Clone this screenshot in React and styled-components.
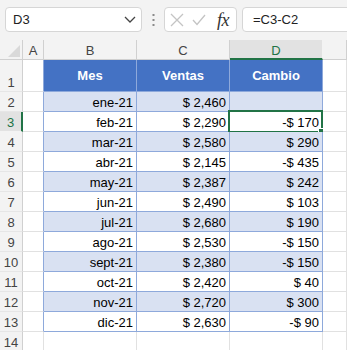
import React from "react";
import styled, { createGlobalStyle, css } from "styled-components";

const GlobalStyle = createGlobalStyle`
  html, body { margin: 0; padding: 0; background: #ffffff; overflow: hidden; }
  body { font-family: "Liberation Sans", Arial, sans-serif; }
`;

const GREEN = "#217346";
const BLUE_FILL = "#4472c4";
const BAND = "#d9e1f2";
const BLUE_LINE = "#8ea9db";
const GRID = "#e1e1e1";
const HEAD_LINE = "#d0d0d0";

const Page = styled.div`
  width: 347px;
  height: 350px;
  overflow: hidden;
  display: flex;
  flex-direction: column;
`;

const Toolbar = styled.div`
  height: 40px;
  flex: none;
  background: #f3f3f3;
  display: flex;
  align-items: flex-start;
  padding: 7px 0 0 5px;
  box-sizing: border-box;
  overflow: hidden;
`;

const Box = styled.div`
  height: 25px;
  box-sizing: border-box;
  background: #ffffff;
  border: 1px solid #d6d6d6;
  border-radius: 4px;
  display: flex;
  align-items: center;
  flex: none;
`;

const NameBox = styled(Box)`
  width: 137px;
  padding: 0 5px 0 7px;
  justify-content: space-between;
  font-size: 13px;
  color: #222;
`;

const Dots = styled.div`
  width: 22px;
  height: 25px;
  display: flex;
  align-items: center;
  justify-content: center;
  flex: none;
`;

const FxBox = styled(Box)`
  width: 73px;
  padding: 0 4px 0 5px;
  gap: 8px;
`;

const FxText = styled.span`
  font-family: "Liberation Serif", "DejaVu Serif", serif;
  font-style: italic;
  font-size: 18px;
  color: #333;
  margin-left: 3px;
  line-height: 1;
  letter-spacing: -0.5px;
`;

const FormulaBox = styled(Box)`
  margin-left: 5px;
  width: 160px;
  padding-left: 10px;
  font-size: 13px;
  color: #222;
`;

const Sheet = styled.div`
  display: grid;
  grid-template-columns: 23px 21px 93px 93px 93px 1fr;
  grid-template-rows: 20px 32px repeat(13, 20px);
  font-size: 13px;
`;

const Cell = styled.div`
  box-sizing: border-box;
  position: relative;
  display: flex;
  align-items: flex-end;
  justify-content: ${(p) => p.$align || "flex-end"};
  padding: 0 3px 1px 3px;
  white-space: nowrap;
  color: #000;
  background: ${(p) => p.$fill || "#ffffff"};
  border-right: 1px solid ${(p) => p.$right || GRID};
  border-bottom: 1px solid ${(p) => p.$bottom || GRID};
  ${(p) =>
    p.$head &&
    css`
      align-items: center;
      justify-content: center;
      padding: 0;
      font-weight: bold;
      color: #ffffff;
    `}
`;

const ColHead = styled.div`
  box-sizing: border-box;
  display: flex;
  align-items: center;
  justify-content: center;
  padding-top: 2px;
  font-size: 13px;
  color: ${(p) => (p.$active ? GREEN : "#444")};
  background: ${(p) => (p.$active ? "#e2e2e2" : "#f3f3f3")};
  border-right: 1px solid ${(p) => (p.$active ? "#f3f3f3" : HEAD_LINE)};
  border-bottom: ${(p) => (p.$active ? `2px solid ${GREEN}` : `1px solid ${HEAD_LINE}`)};
  position: relative;
`;

const RowHead = styled.div`
  box-sizing: border-box;
  display: flex;
  align-items: flex-end;
  justify-content: center;
  padding-bottom: 1px;
  font-size: 13px;
  color: ${(p) => (p.$active ? GREEN : "#444")};
  background: ${(p) => (p.$active ? "#e2e2e2" : "#f3f3f3")};
  border-right: ${(p) => (p.$active ? `2px solid ${GREEN}` : `1px solid ${HEAD_LINE}`)};
  border-bottom: 1px solid ${(p) => (p.$active ? "#f3f3f3" : "#e6e6e6")};
`;

const Corner = styled(ColHead)`
  align-items: flex-end;
  justify-content: flex-end;
  padding: 0 2px 2px 0;
`;

const Selection = styled.div`
  position: absolute;
  left: -2px;
  top: -2px;
  right: -1px;
  bottom: -2px;
  border: 2px solid ${GREEN};
  pointer-events: none;
`;

const Handle = styled.div`
  position: absolute;
  right: -4px;
  bottom: -4px;
  width: 5px;
  height: 5px;
  background: ${GREEN};
  border: 1px solid #ffffff;
`;

const data = [
  ["ene-21", "$ 2,460", ""],
  ["feb-21", "$ 2,290", "-$ 170"],
  ["mar-21", "$ 2,580", "$ 290"],
  ["abr-21", "$ 2,145", "-$ 435"],
  ["may-21", "$ 2,387", "$ 242"],
  ["jun-21", "$ 2,490", "$ 103"],
  ["jul-21", "$ 2,680", "$ 190"],
  ["ago-21", "$ 2,530", "-$ 150"],
  ["sept-21", "$ 2,380", "-$ 150"],
  ["oct-21", "$ 2,420", "$ 40"],
  ["nov-21", "$ 2,720", "$ 300"],
  ["dic-21", "$ 2,630", "-$ 90"],
];

const Chevron = () => (
  <svg width="12" height="7" viewBox="0 0 12 7">
    <path d="M1 1 L6 6 L11 1" fill="none" stroke="#444" strokeWidth="1.3" />
  </svg>
);

const VDots = () => (
  <svg width="3" height="12" viewBox="0 0 3 12">
    <rect x="0.5" y="0" width="2" height="2" fill="#8a8a8a" />
    <rect x="0.5" y="5" width="2" height="2" fill="#8a8a8a" />
    <rect x="0.5" y="10" width="2" height="2" fill="#8a8a8a" />
  </svg>
);

const XIcon = () => (
  <svg width="14" height="14" viewBox="0 0 14 14">
    <path d="M1 1 L13 13 M13 1 L1 13" stroke="#c4c4c4" strokeWidth="1.3" fill="none" />
  </svg>
);

const CheckIcon = () => (
  <svg width="14" height="12" viewBox="0 0 14 12">
    <path d="M1 6 L5 10.5 L13 1" stroke="#c4c4c4" strokeWidth="1.3" fill="none" />
  </svg>
);

const CornerTri = () => (
  <svg width="12" height="12" viewBox="0 0 12 12">
    <path d="M12 0 L12 12 L0 12 Z" fill="#d9d9d9" />
  </svg>
);

export default function App() {
  const rows = [];
  // Row 1: header
  rows.push(
    <React.Fragment key="r1">
      <RowHead>1</RowHead>
      <Cell $right={BLUE_LINE} />
      <Cell $head $fill={BLUE_FILL} $right={BLUE_LINE} $bottom={BLUE_LINE}>Mes</Cell>
      <Cell $head $fill={BLUE_FILL} $right={BLUE_LINE} $bottom={BLUE_LINE}>Ventas</Cell>
      <Cell $head $fill={BLUE_FILL} $right={BLUE_LINE} $bottom={BLUE_LINE}>Cambio</Cell>
      <Cell />
    </React.Fragment>
  );
  data.forEach((d, i) => {
    const n = i + 2;
    const fill = n % 2 === 0 ? BAND : "#ffffff";
    const active = n === 3;
    rows.push(
      <React.Fragment key={n}>
        <RowHead $active={active}>{n}</RowHead>
        <Cell $right={BLUE_LINE} />
        <Cell $fill={fill} $right={BLUE_LINE} $bottom={BLUE_LINE}>{d[0]}</Cell>
        <Cell $fill={fill} $right={BLUE_LINE} $bottom={BLUE_LINE}>{d[1]}</Cell>
        <Cell $fill={fill} $right={BLUE_LINE} $bottom={BLUE_LINE}>
          {d[2]}
          {active && (
            <Selection>
              <Handle />
            </Selection>
          )}
        </Cell>
        <Cell />
      </React.Fragment>
    );
  });
  rows.push(
    <React.Fragment key="r14">
      <RowHead>14</RowHead>
      <Cell />
      <Cell />
      <Cell />
      <Cell />
      <Cell />
    </React.Fragment>
  );

  return (
    <Page>
      <GlobalStyle />
      <Toolbar>
        <NameBox>
          <span>D3</span>
          <Chevron />
        </NameBox>
        <Dots>
          <VDots />
        </Dots>
        <FxBox>
          <XIcon />
          <CheckIcon />
          <FxText>fx</FxText>
        </FxBox>
        <FormulaBox>=C3-C2</FormulaBox>
      </Toolbar>
      <Sheet>
        <Corner>
          <CornerTri />
        </Corner>
        <ColHead>A</ColHead>
        <ColHead>B</ColHead>
        <ColHead>C</ColHead>
        <ColHead $active>D</ColHead>
        <ColHead />
        {rows}
      </Sheet>
    </Page>
  );
}
